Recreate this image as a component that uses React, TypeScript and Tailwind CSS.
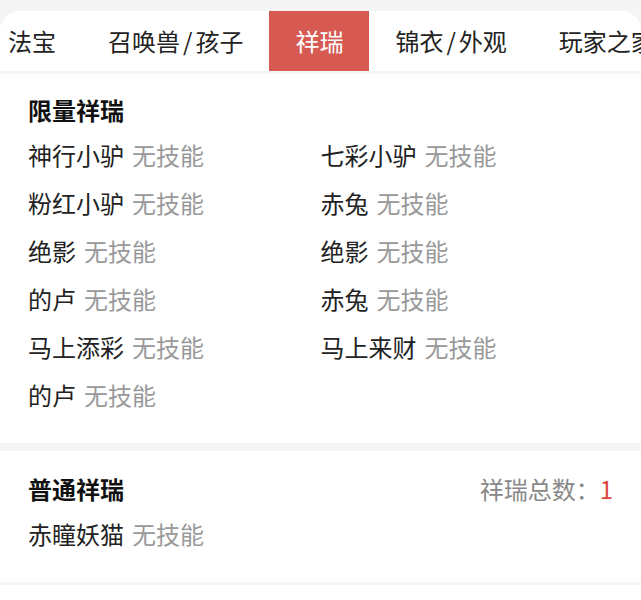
const tabs = ["法宝", "召唤兽/孩子", "祥瑞", "锦衣/外观", "玩家之家"];

const limited = [
  "神行小驴",
  "七彩小驴",
  "粉红小驴",
  "赤兔",
  "绝影",
  "绝影",
  "的卢",
  "赤兔",
  "马上添彩",
  "马上来财",
  "的卢",
];

const normal = ["赤瞳妖猫"];

function Item({ name }: { name: string }) {
  return (
    <div className="h-[48px] leading-[48px] whitespace-nowrap">
      <span className="text-[#222]">{name}</span>
      <span className="ml-[8px] text-[#999]">无技能</span>
    </div>
  );
}

function TabLabel({ text }: { text: string }) {
  const parts = text.split("/");
  if (parts.length === 1) return <>{text}</>;
  return (
    <>
      {parts[0]}
      <span className="mx-[3px]">/</span>
      {parts[1]}
    </>
  );
}

export default function App() {
  return (
    <div
      className="min-h-[600px] bg-[#f5f5f5] pt-[11px] text-[24px]"
      style={{ fontFamily: '"Noto Sans CJK SC", "Noto Sans", sans-serif' }}
    >
      {/* Tabs */}
      <div className="flex h-[60px] bg-white rounded-t-[20px] overflow-hidden whitespace-nowrap">
        {tabs.map((t, i) => (
          <div
            key={t}
            className={`flex items-center shrink-0 h-full ${i === 0 ? "pl-[8px] pr-[26px]" : "px-[26px]"} ${
              i === 2 ? "bg-[#d65a52] text-white" : "text-[#222]"
            }`}
          >
            <TabLabel text={t} />
          </div>
        ))}
      </div>

      {/* Limited */}
      <div className="mt-[3px] bg-white px-[28px] pt-[20px] pb-[24px]">
        <div className="h-[32px] leading-[32px] font-bold text-[#111]">限量祥瑞</div>
        <div className="mt-[5px] grid grid-cols-2">
          {limited.map((n, i) => (
            <Item key={i} name={n} />
          ))}
        </div>
      </div>

      {/* Normal */}
      <div className="mt-[8px] bg-white px-[28px] pt-[22px] pb-[24px]">
        <div className="flex justify-between h-[32px] leading-[32px]">
          <span className="font-bold text-[#111]">普通祥瑞</span>
          <span className="text-[#888]">
            祥瑞总数：<span className="text-[#e0443e]">1</span>
          </span>
        </div>
        <div className="mt-[5px] grid grid-cols-2">
          {normal.map((n, i) => (
            <Item key={i} name={n} />
          ))}
        </div>
      </div>

      <div className="mt-[3px] bg-white h-[40px]" />
    </div>
  );
}
